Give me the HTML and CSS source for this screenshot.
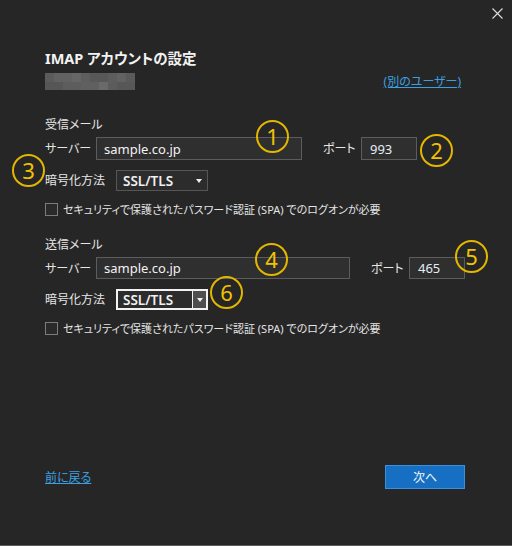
FILE: index.html
```html
<!DOCTYPE html>
<html lang="ja">
<head>
<meta charset="utf-8">
<title>IMAP アカウントの設定</title>
<link rel="stylesheet" href="styles.css">
</head>
<body>
<div class="window">
  <div class="titlebar">
    <svg class="close" width="11" height="11" viewBox="0 0 11 11"><path d="M0.5 0.5 L10.5 10.5 M10.5 0.5 L0.5 10.5" stroke="#dcdcdc" stroke-width="1.1" fill="none"/></svg>
  </div>
  <main class="content">
    <h1 class="title">IMAP アカウントの設定</h1>
    <div class="account-row">
      <div class="mosaic"></div>
      <a class="link" href="#">(別のユーザー)</a>
    </div>

    <section class="group incoming">
      <div class="group-label">受信メール</div>
      <div class="row server-row">
        <span class="label label-server">サーバー</span>
        <div class="input server server-in">sample.co.jp</div>
        <span class="label label-port">ポート</span>
        <div class="input port">993</div>
      </div>
      <div class="row enc-row">
        <span class="label label-enc">暗号化方法</span>
        <div class="select">
          <span class="select-text">SSL/TLS</span>
          <span class="select-btn"><span class="arrow"></span></span>
        </div>
      </div>
      <div class="check-row">
        <span class="checkbox"></span>
        <span class="check-text">セキュリティで保護されたパスワード認証 (SPA) でのログオンが必要</span>
      </div>
    </section>

    <section class="group outgoing">
      <div class="group-label">送信メール</div>
      <div class="row server-row row-out">
        <span class="label label-server">サーバー</span>
        <div class="input server server-out">sample.co.jp</div>
        <span class="label label-port">ポート</span>
        <div class="input port">465</div>
      </div>
      <div class="row enc-row">
        <span class="label label-enc">暗号化方法</span>
        <div class="select focused">
          <span class="select-text">SSL/TLS</span>
          <span class="select-btn"><span class="arrow"></span></span>
        </div>
      </div>
      <div class="check-row">
        <span class="checkbox"></span>
        <span class="check-text">セキュリティで保護されたパスワード認証 (SPA) でのログオンが必要</span>
      </div>
    </section>
  </main>
  <footer class="footer">
    <a class="link back" href="#">前に戻る</a>
    <button class="next" type="button">次へ</button>
  </footer>

  <div class="mark m1">1</div>
  <div class="mark m2">2</div>
  <div class="mark m3">3</div>
  <div class="mark m4">4</div>
  <div class="mark m5">5</div>
  <div class="mark m6">6</div>
</div>
</body>
</html>
```

FILE: styles.css
```css
html, body {
  margin: 0;
  padding: 0;
  background: #262626;
}

body {
  width: 512px;
  height: 546px;
  overflow: hidden;
  font-family: "Noto Sans", "Noto Sans CJK JP", sans-serif;
  font-feature-settings: "palt";
  font-size: 12px;
  color: #e4e4e4;
}

.window {
  position: relative;
  width: 512px;
  height: 546px;
  box-sizing: border-box;
  border-bottom: 1px solid #5a5a5a;
  display: flex;
  flex-direction: column;
}

.titlebar {
  height: 48px;
  display: flex;
  justify-content: flex-end;
  align-items: flex-start;
  padding: 8px 9px 0 0;
  box-sizing: border-box;
}

.close {
  display: block;
}

.content {
  padding: 0 51px 0 45px;
}

.title {
  margin: 0;
  font-size: 14.5px;
  font-weight: 700;
  line-height: 20px;
  color: #f2f2f2;
}

.account-row {
  margin-top: 5px;
  height: 17px;
  display: flex;
  justify-content: space-between;
  align-items: center;
}

.mosaic {
  width: 90px;
  height: 17px;
  background:
    linear-gradient(90deg, #5b5b5b 0 9px, #626262 9px 27px, #666 27px 36px, #5e5e5e 36px 45px, #585858 45px 63px, #5d5d5d 63px 72px, #626262 72px 81px, #5a5a5a 81px 90px) top / 100% 9px no-repeat,
    linear-gradient(90deg, #565656 0 18px, #5d5d5d 18px 36px, #606060 36px 54px, #6a6a6a 54px 63px, #5c5c5c 63px 72px, #575757 72px 90px) bottom / 100% 8px no-repeat;
}

.link {
  color: #3ba0e2;
  text-decoration: underline;
  font-size: 12px;
  line-height: 17px;
}

.group.incoming {
  margin-top: 26px;
}

.group.outgoing {
  margin-top: 18px;
}

.group-label {
  line-height: 17px;
  color: #e6e6e6;
}

.row {
  display: flex;
  align-items: center;
}

.server-row {
  margin-top: 4px;
  height: 23px;
}

.row-out {
  height: 22px;
}

.label {
  color: #e6e6e6;
  line-height: 17px;
  flex: none;
}

.label-server {
  width: 51px;
}

.label-enc {
  width: 71px;
}

.label-port {
  width: 38px;
  margin-left: 21px;
}

.input {
  box-sizing: border-box;
  height: 100%;
  background: #2f2f2f;
  border: 1px solid #5c5c5c;
  padding-left: 7px;
  font-size: 13px;
  color: #f2f2f2;
  display: flex;
  align-items: center;
  flex: none;
}

.server-in {
  width: 206px;
}

.server-out {
  width: 254px;
}

.port {
  width: 56px;
  padding-left: 8px;
  color: #e6ecf6;
}

.enc-row {
  margin-top: 10px;
  height: 21px;
}

.select {
  box-sizing: border-box;
  width: 92px;
  height: 21px;
  background: #2c2c2c;
  border: 1px solid #565656;
  display: flex;
  align-items: center;
}

.select-text {
  flex: 1;
  padding-left: 6px;
  font-size: 13.5px;
  font-weight: 600;
  color: #f0f0f0;
}

.select-btn {
  width: 17px;
  align-self: stretch;
  display: flex;
  align-items: center;
  justify-content: center;
  box-sizing: border-box;
}

.arrow {
  width: 0;
  height: 0;
  border-left: 3.5px solid transparent;
  border-right: 3.5px solid transparent;
  border-top: 4px solid #f0f0f0;
}

.select.focused {
  border: 2px solid #f2f2f2;
}

.select.focused .select-text {
  padding-left: 5px;
}

.select.focused .select-btn {
  width: 14px;
  background: #4e4e4e;
  border-left: 1px solid #f2f2f2;
}

.check-row {
  margin-top: 10px;
  height: 17px;
  display: flex;
  align-items: center;
}

.checkbox {
  box-sizing: border-box;
  width: 13px;
  height: 13px;
  border: 1px solid #7c7c7c;
  background: #2a2a2a;
  margin-right: 5px;
  flex: none;
}

.check-text {
  font-size: 11px;
  line-height: 17px;
  color: #e4e4e4;
  white-space: nowrap;
}

.footer {
  margin-top: auto;
  padding: 0 47px 56px 45px;
  display: flex;
  justify-content: space-between;
  align-items: center;
}

.back {
  line-height: 17px;
}

.next {
  width: 80px;
  height: 24px;
  box-sizing: border-box;
  background: #176fc3;
  border: 1px solid #3b8fe0;
  color: #f5f5f5;
  font-family: "Noto Sans", "Noto Sans CJK JP", sans-serif;
  font-feature-settings: "palt";
  font-size: 12px;
  padding: 0;
}

.mark {
  position: absolute;
  width: 33px;
  height: 33px;
  box-sizing: border-box;
  border: 2px solid #e3b600;
  border-radius: 50%;
  color: #f2c200;
  font-family: "Noto Sans", sans-serif;
  font-size: 22px;
  line-height: 29px;
  text-align: center;
}

.m1 { left: 256px; top: 120px; }
.m2 { left: 420px; top: 134px; }
.m3 { left: 12px;  top: 154px; }
.m4 { left: 255px; top: 243px; }
.m5 { left: 455px; top: 240px; }
.m6 { left: 210px; top: 276px; }
```
